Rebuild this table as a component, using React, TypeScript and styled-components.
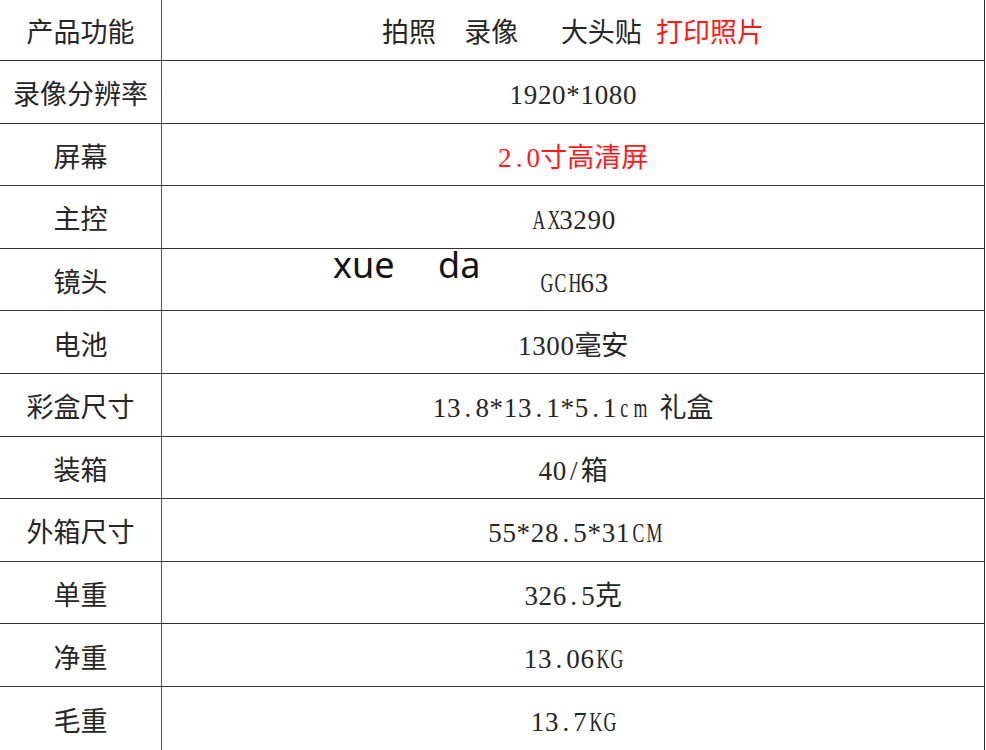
import React from "react";
import styled, { createGlobalStyle } from "styled-components";

const GlobalStyle = createGlobalStyle`
  html, body {
    margin: 0;
    padding: 0;
    background: #ffffff;
  }
  body {
    font-family: "Noto Sans CJK SC", sans-serif;
  }
`;

type Part = { text: string; red?: boolean };

type Spec = {
  label: string;
  value: Part[];
};

const rows: Spec[] = [
  {
    label: "产品功能",
    value: [{ text: "拍照  录像   大头贴 " }, { text: "打印照片", red: true }]
  },
  { label: "录像分辨率", value: [{ text: "1920*1080" }] },
  { label: "屏幕", value: [{ text: "2.0寸高清屏", red: true }] },
  { label: "主控", value: [{ text: "AX3290" }] },
  { label: "镜头", value: [{ text: "GCH63" }] },
  { label: "电池", value: [{ text: "1300毫安" }] },
  { label: "彩盒尺寸", value: [{ text: "13.8*13.1*5.1cm 礼盒" }] },
  { label: "装箱", value: [{ text: "40/箱" }] },
  { label: "外箱尺寸", value: [{ text: "55*28.5*31CM" }] },
  { label: "单重", value: [{ text: "326.5克" }] },
  { label: "净重", value: [{ text: "13.06KG" }] },
  { label: "毛重", value: [{ text: "13.7KG" }] }
];

type Kind = "latin" | "cjk";

// split a string into latin / cjk runs; latin is set on a half-width grid
function runs(text: string) {
  const out: { kind: Kind; text: string }[] = [];
  for (const ch of text) {
    const kind: Kind = ch.charCodeAt(0) < 128 ? "latin" : "cjk";
    const last = out[out.length - 1];
    if (last && last.kind === kind) last.text += ch;
    else out.push({ kind, text: ch });
  }
  return out;
}

function Mixed({ text }: { text: string }) {
  return (
    <>
      {runs(text).map((r, i) =>
        r.kind === "latin" ? (
          <span key={i}>
            {Array.from(r.text).map((ch, k) => (
              <Half key={k} $letter={/[A-Za-z]/.test(ch)}>
                {ch === " " ? "\u00a0" : ch}
              </Half>
            ))}
          </span>
        ) : (
          <span key={i}>{r.text}</span>
        )
      )}
    </>
  );
}

export default function App() {
  return (
    <>
      <GlobalStyle />
      <Page>
        <Table>
          {rows.map((row, i) => (
            <Row key={row.label} $last={i === rows.length - 1}>
              <LabelCell>
                <Mixed text={row.label} />
              </LabelCell>
              <ValueCell>
                {row.value.map((p, j) => (
                  <Chunk key={j} $red={p.red}>
                    <Mixed text={p.text} />
                  </Chunk>
                ))}
              </ValueCell>
            </Row>
          ))}
        </Table>
        <Watermark>xue    da</Watermark>
      </Page>
    </>
  );
}

const Page = styled.div`
  position: relative;
  width: 986px;
  height: 750px;
  overflow: hidden;
`;

const Table = styled.div`
  display: flex;
  flex-direction: column;
  width: 985px;
  margin-top: -1.6px;
  border-right: 1px solid #333;
  box-sizing: border-box;
`;

const Row = styled.div<{ $last?: boolean }>`
  display: grid;
  grid-template-columns: 162px 1fr;
  height: 62.6px;
  box-sizing: border-box;
  border-bottom: ${(p) => (p.$last ? "none" : "1px solid #333")};
`;

const Cell = styled.div`
  display: flex;
  align-items: center;
  justify-content: center;
  font-size: 27px;
  color: #262626;
  white-space: pre;
  padding-top: 2px;
`;

const LabelCell = styled(Cell)`
  border-right: 1px solid #555;
`;

const ValueCell = styled(Cell)``;

const Chunk = styled.span<{ $red?: boolean }>`
  color: ${(p) => (p.$red ? "#ff1a1a" : "inherit")};
`;

const Half = styled.span<{ $letter?: boolean }>`
  display: inline-block;
  width: 14.2px;
  text-align: center;
  font-family: "Liberation Serif", serif;
  font-size: 27px;
  transform: ${(p) => (p.$letter ? "scaleX(0.66)" : "none")};
`;

const Watermark = styled.div`
  position: absolute;
  left: 333px;
  top: 243px;
  font-family: "Noto Sans", sans-serif;
  font-size: 36px;
  word-spacing: 1.5px;
  color: #111;
  white-space: pre;
  line-height: 1.2;
`;
